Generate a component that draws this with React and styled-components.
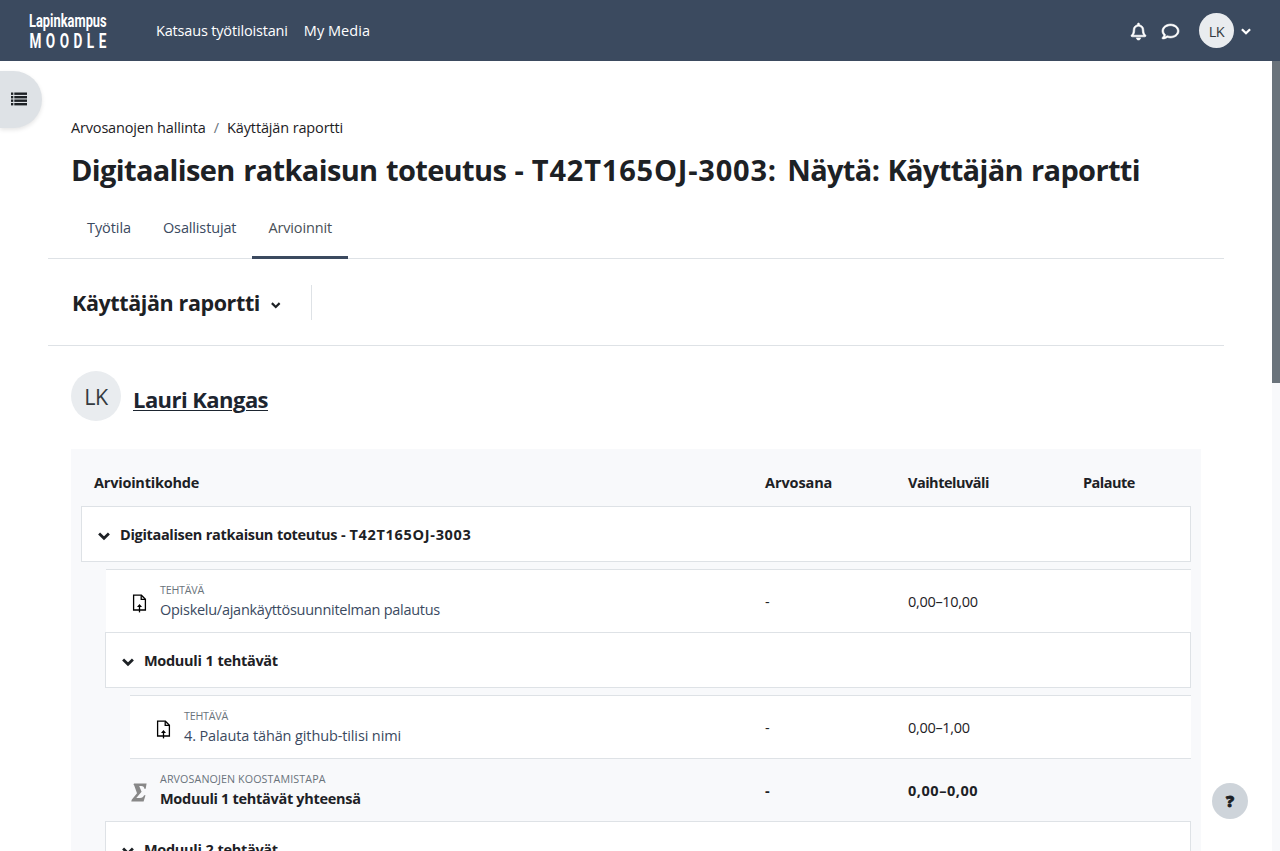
import React from 'react';
import styled, { createGlobalStyle } from 'styled-components';
import { FaRegBell, FaRegComment } from 'react-icons/fa';

const Global = createGlobalStyle`
  * { box-sizing: border-box; }
  body { margin: 0; background: #fff; color: #1d2125; font-family: "Open Sans", "Noto Sans", sans-serif; font-size: 14.5px; line-height: 22px; overflow: hidden; }
  h1, h2, h3, p { margin: 0; }
`;

const Page = styled.div`
  position: relative;
  display: flex;
  flex-direction: column;
  height: 851px;
  overflow: hidden;
`;

const Navbar = styled.header`
  flex: none;
  display: flex;
  align-items: center;
  height: 61px;
  padding: 0 29px;
  background: #3b4a5f;
  color: #fff;
`;

const Logo = styled.svg`
  width: 84px;
  height: 44px;
  margin-right: 43px;
  overflow: visible;
  fill: #fff;
  font-family: Roboto, sans-serif;
  font-weight: 700;
`;

const NavLinks = styled.nav`
  display: flex;
  gap: 16px;
  flex: 1;
`;

const Label = styled.span`
  white-space: pre;
  letter-spacing: ${p => p.$ls || 0}px;
  word-spacing: ${p => p.$ws || 0}px;
`;

const NavIcons = styled.div`
  display: flex;
  align-items: center;
  gap: 15px;
  margin-right: 20px;
  padding-top: 2px;
  svg { display: block; stroke: #fff; stroke-width: 18px; overflow: visible; }
`;

const Avatar = styled.div`
  flex: none;
  display: flex;
  align-items: center;
  justify-content: center;
  width: ${p => p.$size}px;
  height: ${p => p.$size}px;
  border-radius: 50%;
  background: #e9ecef;
  color: #343a40;
  font-size: ${p => p.$font}px;
  letter-spacing: -0.5px;
  padding-top: 2px;
`;

const ChevronSvg = styled.svg`
  flex: none;
  display: block;
  margin: ${p => p.$margin || 0};
  fill: none;
  stroke: currentColor;
  stroke-width: 2.5;
`;

const Chevron = ({ size = 11, margin }) => (
  <ChevronSvg width={size} height={size * 8 / 11} viewBox="0 0 11 8" $margin={margin}>
    <path d="M1 1.3 5.5 5.8 10 1.3" />
  </ChevronSvg>
);

const Body = styled.div`
  display: flex;
  flex: 1;
  min-height: 0;
`;

const Main = styled.main`
  flex: 1;
  padding: 56px 48px 0;
  overflow: hidden;
`;

const Scrollbar = styled.div`
  width: 8px;
  background: #f8f9fb;
`;

const Thumb = styled.div`
  height: 322px;
  background: #6a737b;
`;

const DrawerToggle = styled.button`
  position: absolute;
  left: 0;
  top: 71px;
  display: flex;
  align-items: center;
  width: 42px;
  height: 57px;
  padding: 0 0 2px 11px;
  border: 0;
  border-radius: 0 29px 29px 0;
  background: #dee2e6;
  color: #1d2125;
  box-shadow: 0 2px 4px rgba(0, 0, 0, 0.1);
`;

const Breadcrumbs = styled.div`
  display: flex;
  gap: 8px;
  padding-left: 23px;
`;

const Slash = styled.span`
  color: #6a737b;
`;

const Title = styled.h1`
  padding: 10px 0 1px 23px;
  font-size: 29px;
  line-height: 42px;
  font-weight: 700;
  white-space: nowrap;
`;

const Tabs = styled.nav`
  display: flex;
  height: 67px;
  padding: 5px 0 0 23px;
  border-bottom: 1px solid #dee2e6;
`;

const Tab = styled.a`
  height: 62px;
  padding: 20px 16px 0;
  margin-bottom: -1px;
  color: ${p => (p.$active ? '#495057' : '#3b4a5f')};
  border-bottom: ${p => (p.$active ? '3px solid #3b4a5f' : '0')};
`;

const Toolbar = styled.div`
  display: flex;
  align-items: center;
  height: 87px;
  padding-left: 24px;
  border-bottom: 1px solid #dee2e6;
`;

const ReportName = styled.h2`
  padding-top: 2px;
  font-size: 21.5px;
  line-height: 30px;
  font-weight: 700;
`;

const Divider = styled.div`
  width: 1px;
  height: 35px;
  background: #dee2e6;
`;

const UserHeading = styled.div`
  display: flex;
  gap: 12px;
  padding: 25px 0 28px 23px;
`;

const UserName = styled.h2`
  padding-top: 12px;
  font-size: 22px;
  line-height: 32px;
  font-weight: 700;
  color: #1d2530;
  text-decoration: underline;
  text-decoration-thickness: 1px;
  text-underline-offset: 2px;
`;

const Report = styled.section`
  margin: 0 23px;
  width: 1130px;
  height: 520px;
  padding: 10px;
  background: #f8f9fb;
`;

const columns = '1fr 143px 175px 108px';

const HeadRow = styled.div`
  display: grid;
  grid-template-columns: ${columns};
  height: 47px;
  padding: 13px 0 0 13px;
  font-weight: 700;
`;

const Group = styled.div`
  display: flex;
  align-items: center;
  gap: 10px;
  height: 56px;
  margin-left: ${p => p.$level * 24}px;
  padding: 1px 16px 0;
  border: 1px solid #dee2e6;
  background: #fff;
  font-weight: 700;
`;

const Item = styled.div`
  display: grid;
  grid-template-columns: ${columns};
  align-items: center;
  height: ${p => (p.$total ? 62 : p.$last ? 64 : 63)}px;
  margin-top: ${p => (p.$total ? 0 : 7)}px;
  margin-left: ${p => p.$level * 24 + 1}px;
  border-top: ${p => (p.$total ? 0 : 1)}px solid #dee2e6;
  border-bottom: ${p => (p.$last ? 1 : 0)}px solid #dee2e6;
  background: ${p => (p.$total ? 'transparent' : '#fff')};
  font-weight: ${p => (p.$total ? 700 : 400)};
`;

const ItemName = styled.div`
  display: flex;
  align-items: center;
  gap: 12px;
  padding-left: 25px;
  color: ${p => (p.$total ? '#1d2125' : '#3b4a5f')};
`;

const Value = styled.div`
  padding-top: 2px;
`;

const IconBox = styled.div`
  display: flex;
  justify-content: ${p => (p.$total ? 'flex-start' : 'center')};
  width: 17px;
  margin-top: 4px;
`;

const Kind = styled.div`
  font-size: 10.7px;
  line-height: 17px;
  font-weight: 400;
  color: #6a737b;
`;

const Stack = styled.div`
  display: flex;
  flex-direction: column;
`;

const HelpButton = styled.button`
  position: absolute;
  right: 32px;
  bottom: 32px;
  width: 36px;
  height: 36px;
  padding: 0;
  border: 0;
  border-radius: 50%;
  background: #ced4da;
  color: #1d2125;
  font: 900 16px/36px "Open Sans", sans-serif;
  -webkit-text-stroke: 0.8px #1d2125;
`;

const ListIcon = () => (
  <svg width="16" height="14" viewBox="0 0 16 14" fill="currentColor">
    {[0.5, 4, 7.5, 11].map(y => (
      <React.Fragment key={y}>
        <rect x="0" y={y} width="2.3" height="2.4" />
        <rect x="3.3" y={y} width="12.7" height="2.4" />
      </React.Fragment>
    ))}
  </svg>
);

const AssignIcon = () => (
  <svg width="15" height="19" viewBox="0 0 15 19" fill="none" stroke="#000" strokeWidth="1.3">
    <path d="M7.5 16H1.6V1.2H9.4L13.4 5.2V16H7.5" />
    <path d="M9.2 1.4V5.4H13.2" />
    <path d="M7.5 18.4V11" />
    <path d="M5 13 7.5 10 10 13Z" fill="#000" stroke="none" />
  </svg>
);

const SumIcon = () => (
  <svg width="16" height="19" viewBox="0 0 16 19" fill="#888">
    <path d="M3 0.5H15.6L14.7 5.7H13.3C13.2 3.8 12.4 2.9 10.2 2.9H8.2L10.6 8.7 5.3 14.9H9C11.3 14.9 12.2 14.2 13.1 12.2H14.5L12.6 18.5H0.3L0.7 16.7 6 10.2 3.5 3.2C3.3 2.4 3 1.9 2.5 1.7Z" />
  </svg>
);

const GroupRow = ({ level, name, code, ls, ws }) => (
  <Group $level={level}>
    <Chevron size={12} margin="4px 0 0" />
    <div>
      <Label $ls={ls} $ws={ws}>{name}</Label>
      {code && <Label $ls={0.7}>{code}</Label>}
    </div>
  </Group>
);

const ItemRow = ({ level, kind, name, grade, range, total, last, ls, kls, rls }) => (
  <Item $level={level} $total={total} $last={last}>
    <ItemName $total={total}>
      <IconBox $total={total}>{total ? <SumIcon /> : <AssignIcon />}</IconBox>
      <Stack>
        <Kind><Label $ls={kls}>{kind}</Label></Kind>
        <Label $ls={ls}>{name}</Label>
      </Stack>
    </ItemName>
    <Value>{grade}</Value>
    <Value><Label $ls={rls}>{range}</Label></Value>
  </Item>
);

export default function App() {
  return (
    <Page>
      <Global />
      <Navbar>
        <Logo viewBox="0 0 84 44">
          <text transform="translate(0 18.2) scale(0.74 1)" x="0" y="0" fontSize="17.5" textLength="105" lengthAdjust="spacingAndGlyphs">Lapinkampus</text>
          <text transform="translate(0.5 38.5) scale(0.68 1)" x="0" y="0" fontSize="20" textLength="113">MOODLE</text>
        </Logo>
        <NavLinks>
          <Label $ls={-0.17}>Katsaus työtiloistani</Label>
          <Label $ls={0.05}>My Media</Label>
        </NavLinks>
        <NavIcons>
          <FaRegBell size={17} />
          <FaRegComment size={17} />
        </NavIcons>
        <Avatar $size={35} $font={14.5}>LK</Avatar>
        <Chevron size={10} margin="2px 0 0 7px" />
      </Navbar>
      <Body>
        <Main>
          <Breadcrumbs>
            <Label $ls={-0.17}>Arvosanojen hallinta</Label>
            <Slash>/</Slash>
            <Label $ls={-0.14}>Käyttäjän raportti</Label>
          </Breadcrumbs>
          <Title>
            <Label $ls={-0.65} $ws={1.6}>{'Digitaalisen ratkaisun toteutus - '}</Label>
            <Label $ls={0.8} $ws={2}>{'T42T165OJ-3003: '}</Label>
            <Label $ls={-0.65} $ws={1.2}>Näytä: Käyttäjän raportti</Label>
          </Title>
          <Tabs>
            <Tab><Label $ls={-0.08}>Työtila</Label></Tab>
            <Tab><Label $ls={-0.14}>Osallistujat</Label></Tab>
            <Tab $active><Label $ls={-0.13}>Arvioinnit</Label></Tab>
          </Tabs>
          <Toolbar>
            <ReportName><Label $ls={-0.39}>Käyttäjän raportti</Label></ReportName>
            <Chevron size={9.5} margin="7px 30px 0 11px" />
            <Divider />
          </Toolbar>
          <UserHeading>
            <Avatar $size={50} $font={21.5}>LK</Avatar>
            <UserName><Label $ls={-0.55}>Lauri Kangas</Label></UserName>
          </UserHeading>
          <Report>
            <HeadRow>
              <Label $ls={-0.22}>Arviointikohde</Label>
              <Label $ls={-0.1}>Arvosana</Label>
              <Label $ls={-0.5}>Vaihteluväli</Label>
              <Label $ls={-0.5}>Palaute</Label>
            </HeadRow>
            <GroupRow level={0} name="Digitaalisen ratkaisun toteutus - " code="T42T165OJ-3003" ls={-0.32} ws={0.5} />
            <ItemRow level={1} kind="TEHTÄVÄ" name="Opiskelu/ajankäyttösuunnitelman palautus" grade="-" range="0,00–10,00" ls={-0.27} kls={-0.2} rls={-0.3} />
            <GroupRow level={1} name="Moduuli 1 tehtävät" ls={-0.32} ws={0.6} />
            <ItemRow level={2} last kind="TEHTÄVÄ" name="4. Palauta tähän github-tilisi nimi" grade="-" range="0,00–1,00" ls={-0.12} kls={-0.2} rls={-0.3} />
            <ItemRow level={1} total kind="ARVOSANOJEN KOOSTAMISTAPA" name="Moduuli 1 tehtävät yhteensä" grade="-" range="0,00–0,00" ls={-0.3} kls={0.12} rls={0.55} />
            <GroupRow level={1} name="Moduuli 2 tehtävät" ls={-0.32} ws={0.6} />
          </Report>
        </Main>
        <Scrollbar><Thumb /></Scrollbar>
      </Body>
      <DrawerToggle aria-label="Avaa kurssin sisällysluettelo"><ListIcon /></DrawerToggle>
      <HelpButton>?</HelpButton>
    </Page>
  );
}
